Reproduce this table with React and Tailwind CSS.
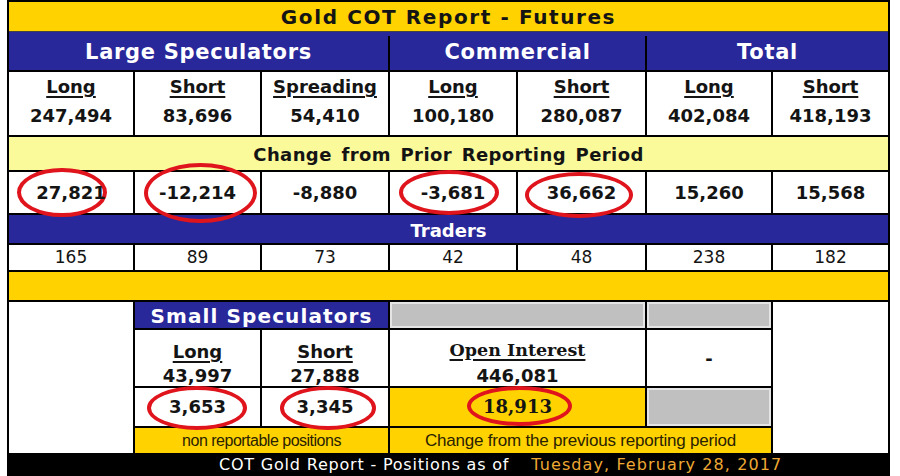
import React from 'react';

const sans = "font-['DejaVu_Sans','Verdana',sans-serif]";
const cols = 'grid grid-cols-[126px_127px_128px_128px_129px_126px_115px]';

function Circled({ children, ring }) {
  return (
    <span className="relative inline-block">
      <span className={`absolute rounded-[50%] border-[4px] border-[#e0141c] ${ring}`} />
      <span className="relative">{children}</span>
    </span>
  );
}

function Cell({ children, last, className = '' }) {
  return (
    <div className={`flex items-center justify-center ${last ? '' : 'border-r-2 border-black'} ${className}`}>
      {children}
    </div>
  );
}

function LabelCell({ label, value, last }) {
  return (
    <div className={`flex flex-col items-center pt-[4px] ${last ? '' : 'border-r-2 border-black'}`}>
      <span className="text-[18px] font-bold leading-[22px] underline decoration-[1.5px] underline-offset-[3px]">{label}</span>
      <span className="mt-[7px] text-[18px] font-bold leading-[22px]">{value}</span>
    </div>
  );
}

export default function App() {
  const top = [
    ['Long', '247,494'],
    ['Short', '83,696'],
    ['Spreading', '54,410'],
    ['Long', '100,180'],
    ['Short', '280,087'],
    ['Long', '402,084'],
    ['Short', '418,193'],
  ];
  const traders = ['165', '89', '73', '42', '48', '238', '182'];

  return (
    <div className={`h-[476px] w-[900px] overflow-hidden bg-white text-[#141414] ${sans}`}>
      <div className="ml-[7px] w-[883px] border-x-2 border-t-2 border-black">
        {/* title */}
        <div className="flex h-[30px] items-center justify-center border-b border-[#444] bg-[#ffd200]">
          <span className="text-[20px] font-bold tracking-[1.6px]">Gold COT Report - Futures</span>
        </div>

        {/* group headers */}
        <div className={`${cols} h-[40px] border-b-2 border-black bg-[#28289a] pt-[4px] text-white`}>
          <Cell className="col-span-3 text-[21px] font-bold tracking-[0.7px]">Large Speculators</Cell>
          <Cell className="col-span-2 text-[21px] font-bold tracking-[0.7px]">Commercial</Cell>
          <Cell last className="col-span-2 text-[21px] font-bold tracking-[0.7px]">Total</Cell>
        </div>

        {/* positions */}
        <div className={`${cols} h-[65px] border-b-2 border-black bg-white`}>
          {top.map(([l, v], i) => (
            <LabelCell key={i} label={l} value={v} last={i === top.length - 1} />
          ))}
        </div>

        {/* change header */}
        <div className="flex h-[35px] items-center justify-center border-b-2 border-black bg-[#fbfa9b] pt-[2px]">
          <span className="text-[18px] font-bold tracking-[0.4px] [word-spacing:3px]">Change from Prior Reporting Period</span>
        </div>

        {/* change values */}
        <div className={`${cols} h-[43px] border-b-2 border-black bg-white text-[18px] font-bold leading-[22px]`}>
          <Cell><Circled ring="-left-[19px] -right-[1px] -top-[14px] -bottom-[13px]">27,821</Circled></Cell>
          <Cell><Circled ring="-left-[15px] -right-[21px] -top-[19px] -bottom-[19px]">-12,214</Circled></Cell>
          <Cell>-8,880</Cell>
          <Cell><Circled ring="-left-[22px] -right-[14px] -top-[12px] -bottom-[11px]">-3,681</Circled></Cell>
          <Cell><Circled ring="-left-[22px] -right-[17px] -top-[10px] -bottom-[14px]">36,662</Circled></Cell>
          <Cell>15,260</Cell>
          <Cell last>15,568</Cell>
        </div>

        {/* traders */}
        <div className="flex h-[30px] items-center justify-center border-b-2 border-black bg-[#28289a] pt-[2px] text-white">
          <span className="text-[18px] font-bold">Traders</span>
        </div>
        <div className={`${cols} h-[27px] border-b-2 border-black bg-white text-[17px] leading-none`}>
          {traders.map((t, i) => (
            <Cell key={i} last={i === traders.length - 1}>{t}</Cell>
          ))}
        </div>

        {/* spacer band */}
        <div className="h-[30px] border-b-2 border-black bg-[#ffd200]" />

        {/* small speculators block */}
        <div className={`${cols} grid-rows-[28px_58px_40px_25px]`}>
          <div className="row-span-4 border-r-2 border-black bg-white" />

          <div className="col-span-2 flex items-center justify-center border-b-2 border-r-2 border-black bg-[#28289a] pt-[2px] text-white">
            <span className="text-[20px] font-bold tracking-[1.1px]">Small Speculators</span>
          </div>
          <div className="col-span-2 border-b-2 border-r-2 border-black bg-[#c0c0c0] shadow-[inset_0_0_0_2px_#e4e4e4]" />
          <div className="border-b-2 border-r-2 border-black bg-[#c0c0c0] shadow-[inset_0_0_0_2px_#e4e4e4]" />
          <div className="row-span-4 bg-white" />

          <div className="flex flex-col items-center border-b-2 border-r-2 border-black bg-white pt-[11px]">
            <span className="text-[18px] font-bold leading-[22px] underline decoration-[1.5px] underline-offset-[3px]">Long</span>
            <span className="mt-[2px] text-[18px] font-bold leading-[22px]">43,997</span>
          </div>
          <div className="flex flex-col items-center border-b-2 border-r-2 border-black bg-white pt-[11px]">
            <span className="text-[18px] font-bold leading-[22px] underline decoration-[1.5px] underline-offset-[3px]">Short</span>
            <span className="mt-[2px] text-[18px] font-bold leading-[22px]">27,888</span>
          </div>
          <div className="col-span-2 flex flex-col items-center border-b-2 border-r-2 border-black bg-white pt-[9px]">
            <span className="font-['DejaVu_Serif',serif] text-[17.5px] font-bold leading-[22px] underline decoration-[1.5px] underline-offset-[3px]">Open Interest</span>
            <span className="mt-[4px] text-[18px] font-bold leading-[22px]">446,081</span>
          </div>
          <div className="flex items-center justify-center border-b-2 border-r-2 border-black bg-white text-[18px] font-bold">-</div>

          <div className="flex items-center justify-center border-b-2 border-r-2 border-black bg-white text-[18px] font-bold leading-[22px]">
            <Circled ring="-left-[22px] -right-[21px] -top-[10px] -bottom-[12px]">3,653</Circled>
          </div>
          <div className="flex items-center justify-center border-b-2 border-r-2 border-black bg-white text-[18px] font-bold leading-[22px]">
            <Circled ring="-left-[17px] -right-[23px] -top-[10px] -bottom-[12px]">3,345</Circled>
          </div>
          <div className="col-span-2 flex items-center justify-center border-b-2 border-r-2 border-black bg-[#ffd200] font-['DejaVu_Serif',serif] text-[18px] font-bold leading-[22px]">
            <Circled ring="-left-[16px] -right-[20px] -top-[10px] -bottom-[8px]">18,913</Circled>
          </div>
          <div className="border-b-2 border-r-2 border-black bg-[#c0c0c0] shadow-[inset_0_0_0_2px_#e4e4e4]" />

          <div className="col-span-2 flex items-center justify-center border-r-2 border-black bg-[#ffd200] font-['Liberation_Sans',Arial,sans-serif] text-[16px] leading-none tracking-[-0.5px] text-[#2a2200]">
            non reportable positions
          </div>
          <div className="col-span-3 flex items-center justify-center border-r-2 border-black bg-[#ffd200] font-['Liberation_Sans',Arial,sans-serif] text-[17px] leading-none tracking-[-0.2px] text-[#2a2200]">
            Change from the previous reporting period
          </div>
        </div>

        {/* footer */}
        <div className="flex h-[23px] items-center bg-black pl-[210px] text-[16px] leading-none text-white">
          <span className="tracking-[0.8px]">COT Gold Report - Positions as of</span>
          <span className="ml-[22px] tracking-[1.1px] text-[#eea833]">Tuesday, February 28, 2017</span>
        </div>
      </div>
    </div>
  );
}
